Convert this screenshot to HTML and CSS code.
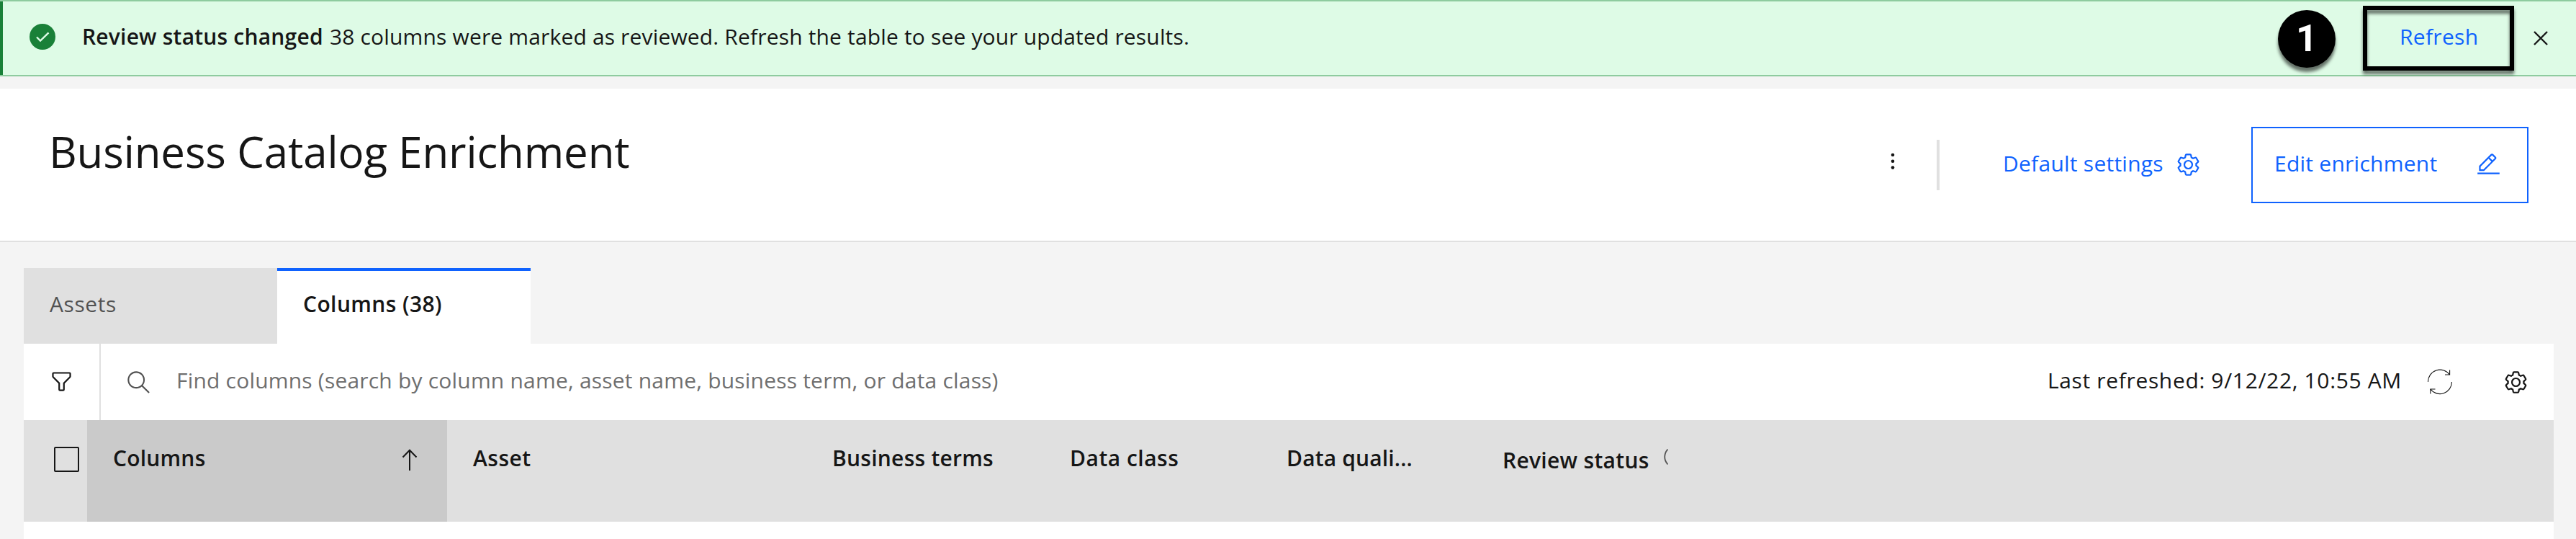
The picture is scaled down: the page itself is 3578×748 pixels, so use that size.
FILE: index.html
```html
<!DOCTYPE html>
<html lang="en">
<head>
<meta charset="utf-8">
<title>Business Catalog Enrichment</title>
<link rel="stylesheet" href="styles.css">
</head>
<body>
<svg class="defs" width="0" height="0">
  <symbol id="settings" viewBox="0 0 32 32">
    <path d="M27,16.76c0-.25,0-.5,0-.76s0-.51,0-.77l1.92-1.68A2,2,0,0,0,29.3,11L26.94,7a2,2,0,0,0-1.73-1,2,2,0,0,0-.64.1l-2.43.82a11.35,11.35,0,0,0-1.31-.75l-.51-2.52a2,2,0,0,0-2-1.61H13.64a2,2,0,0,0-2,1.61l-.51,2.52a11.48,11.48,0,0,0-1.32.75L7.43,6.06A2,2,0,0,0,6.79,6,2,2,0,0,0,5.06,7L2.7,11a2,2,0,0,0,.41,2.51L5,15.24c0,.25,0,.5,0,.76s0,.51,0,.77L3.11,18.45A2,2,0,0,0,2.7,21L5.06,25a2,2,0,0,0,1.73,1,2,2,0,0,0,.64-.1l2.43-.82a11.35,11.35,0,0,0,1.31.75l.51,2.52a2,2,0,0,0,2,1.61h4.72a2,2,0,0,0,2-1.61l.51-2.52a11.48,11.48,0,0,0,1.32-.75l2.42.82a2,2,0,0,0,.64.1,2,2,0,0,0,1.73-1L29.3,21a2,2,0,0,0-.41-2.51ZM25.21,24l-3.43-1.16a8.86,8.86,0,0,1-2.71,1.57L18.36,28H13.64l-.71-3.55a9.36,9.36,0,0,1-2.7-1.57L6.79,24,4.43,20l2.72-2.4a8.9,8.9,0,0,1,0-3.13L4.43,12,6.79,8l3.43,1.16a8.86,8.86,0,0,1,2.71-1.57L13.64,4h4.72l.71,3.55a9.36,9.36,0,0,1,2.7,1.57L25.21,8,27.57,12l-2.72,2.4a8.9,8.9,0,0,1,0,3.13L27.57,20Z"/>
    <path d="M16,22a6,6,0,1,1,6-6A5.94,5.94,0,0,1,16,22Zm0-10a3.91,3.91,0,0,0-4,4,3.91,3.91,0,0,0,4,4,3.91,3.91,0,0,0,4-4A3.91,3.91,0,0,0,16,12Z"/>
  </symbol>
</svg>

<div class="banner">
  <svg class="banner-check" viewBox="0 0 36 36"><circle cx="18" cy="18" r="18"/><path d="M10 18.5l5 5L26.5 12.3"/></svg>
  <p class="banner-title">Review status changed</p>
  <p class="banner-text">38 columns were marked as reviewed. Refresh the table to see your updated results.</p>
  <div class="callout">1</div>
  <div class="refresh"><a class="refresh-link">Refresh</a></div>
  <svg class="close" viewBox="0 0 20 20"><path d="M1 1l18 18M19 1L1 19"/></svg>
</div>

<header class="header">
  <h1 class="title">Business Catalog Enrichment</h1>
  <svg class="overflow" viewBox="0 0 6 24"><circle cx="3" cy="3" r="2.3"/><circle cx="3" cy="11.8" r="2.3"/><circle cx="3" cy="20.6" r="2.3"/></svg>
  <div class="divider"></div>
  <a class="defaults"><span>Default settings</span><svg class="icon"><use href="#settings"/></svg></a>
  <a class="edit"><span>Edit enrichment</span><svg class="icon" viewBox="0 0 32 32"><path d="M2,26H30v2H2ZM25.4,9c.8-.8.8-2,0-2.8L21.8,2.6c-.8-.8-2-.8-2.8,0l-15,15V24h6.4ZM20.4,4,24,7.6l-3,3L17.4,7ZM6,22V18.4l10-10L19.6,12l-10,10Z"/></svg></a>
</header>

<main class="main">
  <nav class="tabs">
    <div class="tab">Assets</div>
    <div class="tab tab-active">Columns (38)</div>
  </nav>
  <section class="panel">
    <div class="toolbar">
      <div class="filter"><svg class="icon" viewBox="0 0 32 32"><path d="M18,28H14a2,2,0,0,1-2-2V18.41L4.59,11A2,2,0,0,1,4,9.59V6A2,2,0,0,1,6,4H26a2,2,0,0,1,2,2V9.59A2,2,0,0,1,27.41,11L20,18.41V26A2,2,0,0,1,18,28ZM6,6V9.59l8,8V26h4V17.59l8-8V6Z"/></svg></div>
      <svg class="icon search" viewBox="0 0 16 16"><path d="M15,14.3L10.7,10c1.9-2.3,1.6-5.8-0.7-7.7S4.2,0.7,2.3,3S0.7,8.8,3,10.7c2,1.7,5,1.7,7,0l4.3,4.3L15,14.3z M2,6.5C2,4,4,2,6.5,2S11,4,11,6.5S9,11,6.5,11S2,9,2,6.5z"/></svg>
      <div class="placeholder">Find columns (search by column name, asset name, business term, or data class)</div>
      <div class="refreshed">Last refreshed: 9/12/22, 10:55 AM</div>
      <svg class="reload" viewBox="-18 -18 36 36"><path d="M-16.5 0A16.5 16.5 0 0 1 13.6 -9.7M13.6 -16.5V-10H7"/><path d="M16.5 0A16.5 16.5 0 0 1 -13.2 10M-6.5 10H-13.2V16.5"/></svg>
      <svg class="icon"><use href="#settings"/></svg>
    </div>
    <div class="thead">
      <div class="th-check"><div class="checkbox"></div></div>
      <div class="th th-sorted">Columns<svg class="arrow" viewBox="0 0 22 31"><path d="M11 30V2M1.5 11.5L11 1.8L20.5 11.5"/></svg></div>
      <div class="th th-asset">Asset</div>
      <div class="th">Business terms</div>
      <div class="th th-class">Data class</div>
      <div class="th th-quality">Data quali...</div>
      <div class="th th-status">Review status<svg class="clipped" viewBox="0 0 6 22"><path d="M5.5 .5C-.2 7 -.2 15 5.5 21.5"/></svg></div>
    </div>
  </section>
</main>
</body>
</html>
```
FILE: styles.css
```css
* { box-sizing: border-box; }
body {
  margin: 0;
  height: 748px;
  overflow: hidden;
  background: #f4f4f4;
  color: #161616;
  font: 400 30px/40px "Open Sans", sans-serif;
  letter-spacing: .25px;
  white-space: nowrap;
}
p, h1 { margin: 0; }
svg { display: block; flex: none; }
.defs { position: absolute; }
.icon { width: 35px; height: 35px; fill: currentColor; }

.banner {
  display: flex;
  align-items: flex-start;
  height: 106px;
  margin-bottom: 17px;
  border: solid #8ecb9f;
  border-width: 2px 0;
  background: #defbe6;
  box-shadow: inset 4px 0 #198038;
}
.banner-check { width: 36px; height: 36px; margin: 31px 0 0 41px; }
.banner-check circle { fill: #198038; }
.banner-check path { fill: none; stroke: #defbe6; stroke-width: 2.4; }
.banner-title { margin: 29px 0 0 37px; width: 344px; font-weight: 600; letter-spacing: .2px; }
.banner-text { margin-top: 29px; letter-spacing: .16px; }
.callout {
  width: 80px;
  height: 80px;
  margin: 12px 0 0 auto;
  border-radius: 50%;
  background: #000;
  color: #fff;
  font: 700 52px/80px Roboto, sans-serif;
  text-align: center;
  box-shadow: 0 6px 4px rgba(0, 0, 0, .55);
}
.refresh {
  position: relative;
  width: 210px;
  height: 90px;
  margin: 6px 27px 0 38px;
  padding: 23px 0 0 51px;
}
.refresh::before {
  content: "";
  position: absolute;
  inset: 0;
  border: 6px solid #000;
  filter: drop-shadow(0 5px 2px rgba(0, 0, 0, .55));
}
.refresh-link { position: relative; color: #0f62fe; letter-spacing: .3px; }
.close { width: 20px; height: 20px; margin: 41px 39px 0 0; }
.close path { stroke: #161616; stroke-width: 2.4; }

.header {
  display: flex;
  align-items: flex-start;
  height: 213px;
  border-bottom: 2px solid #e0e0e0;
  background: #fff;
}
.title { margin: 47px auto 0 68px; font-size: 60px; line-height: 80px; font-weight: 400; letter-spacing: -.15px; }
.overflow { width: 6px; height: 24px; margin-top: 89px; fill: #161616; }
.divider { width: 4px; height: 70px; margin: 71px 88px 0 58px; background: #e0e0e0; }
.defaults { display: flex; margin-top: 84px; width: 345px; color: #0f62fe; }
.defaults span { width: 240px; }
.defaults .icon { margin-top: 4px; }
.edit {
  display: flex;
  justify-content: space-between;
  width: 385px;
  height: 106px;
  margin: 53px 66px 0 0;
  padding: 29px 36px 0 30px;
  border: 2px solid #0f62fe;
  color: #0f62fe;
}
.edit .icon { margin-top: 4px; }

.main { padding: 36px 31px 0 33px; }
.tabs { display: flex; }
.tab {
  width: 352px;
  height: 105px;
  padding: 30px 36px;
  background: #e0e0e0;
  color: #525252;
  letter-spacing: .6px;
}
.tab-active {
  padding-top: 26px;
  border-top: 4px solid #0f62fe;
  background: #fff;
  color: #161616;
  font-weight: 600;
  letter-spacing: .4px;
}
.panel { height: 271px; background: #fff; }
.toolbar { display: flex; align-items: center; height: 106px; padding-right: 35px; }
.filter { width: 107px; height: 106px; padding: 35px; border-right: 2px solid #e0e0e0; }
.search { margin: 0 35px 0 35px; fill: #525252; }
.placeholder { margin-right: auto; padding-bottom: 5px; color: #6f6f6f; letter-spacing: .2px; }
.refreshed { padding-bottom: 5px; letter-spacing: .65px; }
.reload { width: 36px; height: 36px; margin: 0 70px 0 35px; fill: none; stroke: #161616; stroke-width: 1.1; }

.thead {
  display: grid;
  grid-template-columns: 88px 500px 499px 330px 300px 300px 1fr;
  height: 141px;
  background: #e0e0e0;
}
.th-check { padding: 37px 0 0 42px; }
.checkbox { width: 35px; height: 35px; border: 2px solid #161616; border-radius: 2px; }
.th { display: flex; padding: 33px 0 0 36px; font-weight: 600; }
.th-sorted { justify-content: space-between; padding-right: 41px; background: #cacaca; letter-spacing: .2px; }
.th-asset { letter-spacing: .5px; }
.th-class { letter-spacing: .5px; }
.th-quality { padding-left: 37px; letter-spacing: .15px; }
.th-status { padding: 36px 0 0 37px; letter-spacing: .3px; }
.arrow { width: 22px; height: 31px; margin-top: 7px; fill: none; stroke: #161616; stroke-width: 2; }
.clipped { width: 6px; height: 22px; margin: 4px 0 0 20px; fill: none; stroke: #525252; stroke-width: 1.8; }
```
